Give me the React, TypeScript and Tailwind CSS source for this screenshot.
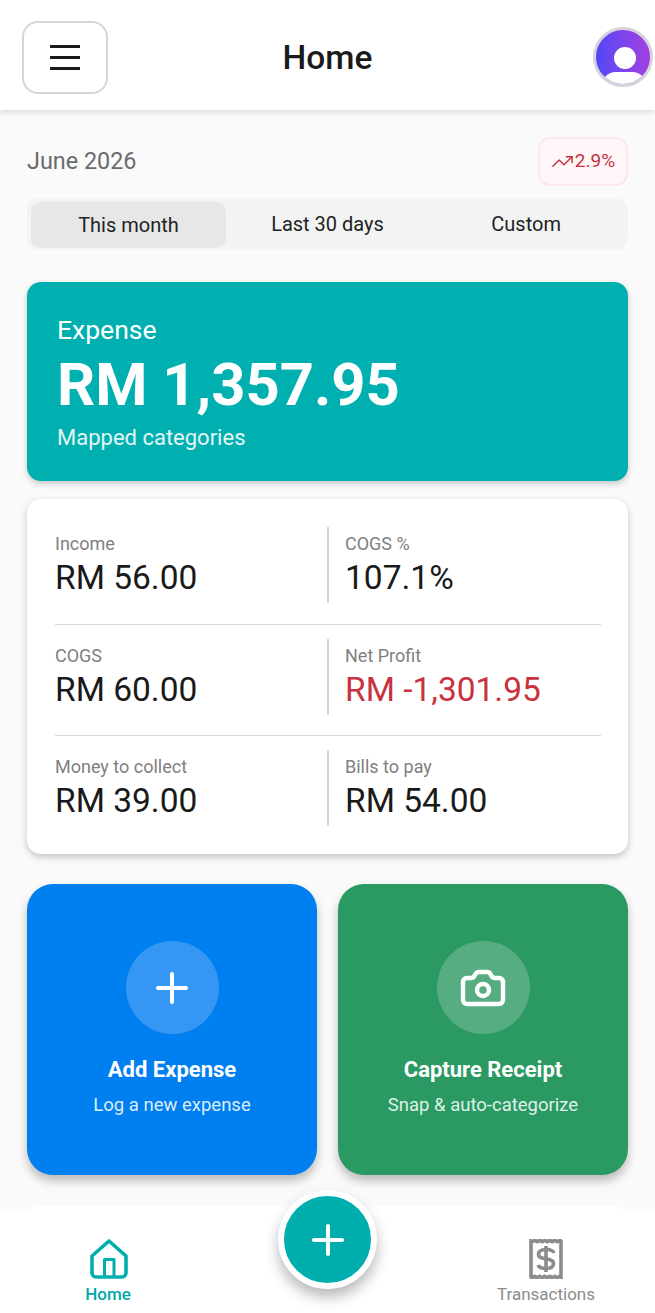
import React from "react";
import { Camera, Plus, TrendingUp } from "lucide-react";

const stats = [
  [
    { label: "Income", value: "RM 56.00" },
    { label: "COGS %", value: "107.1%" },
  ],
  [
    { label: "COGS", value: "RM 60.00" },
    { label: "Net Profit", value: "RM -1,301.95", negative: true },
  ],
  [
    { label: "Money to collect", value: "RM 39.00" },
    { label: "Bills to pay", value: "RM 54.00" },
  ],
];

const rowSpacing = ["", "mt-[21px] border-t border-[#d9d9d9] pt-[14px]", "mt-[20px] border-t border-[#d9d9d9] pt-[14px]"];

const HomeIcon = () => (
  <svg width="38" height="40" viewBox="0 0 38 40" fill="none" stroke="#00aeae" strokeWidth="3.6" strokeLinejoin="round">
    <path d="M19 2 L36 17 V34 a4 4 0 0 1 -4 4 H6 a4 4 0 0 1 -4 -4 V17 Z" />
    <path strokeWidth="3" d="M14.500 38 V20.500 H24 V38" />
  </svg>
);

const ReceiptIcon = () => (
  <svg width="34" height="40" viewBox="0 0 34 40" fill="none" stroke="#8c8c8c">
    <path
      strokeWidth="3.6"
      d="M2 2 q1.250 1.200 2.500 0 t2.500 0 t2.500 0 t2.500 0 t2.500 0 t2.500 0 t2.500 0 t2.500 0 t2.500 0 t2.500 0 t2.500 0 t2.500 0 V38 q-1.250 -1.200 -2.500 0 t-2.500 0 t-2.500 0 t-2.500 0 t-2.500 0 t-2.500 0 t-2.500 0 t-2.500 0 t-2.500 0 t-2.500 0 t-2.500 0 t-2.500 0 Z"
    />
    <path strokeWidth="3.6" d="M25 14 C24 11 21 10.500 17 10.500 C12 10.500 9.500 12 9.500 15.500 C9.500 22 24.500 17.500 24.500 24.500 C24.500 28 22 29.500 17 29.500 C13 29.500 10 28.500 9 26" />
    <path strokeWidth="3.6" d="M17 7 V33" />
  </svg>
);

export default function App() {
  return (
    <div className="relative h-[1313px] w-[655px] overflow-hidden bg-[#fafafa] font-['Roboto',sans-serif] text-[#1a1a1a]">
      {/* Header */}
      <header className="grid h-[110px] grid-cols-[1fr_auto_1fr] items-center bg-white px-[2px] shadow-[0_2px_6px_rgba(0,0,0,0.14)]">
        <button className="ml-[20px] mt-[4px] flex h-[73px] w-[86px] flex-col items-center justify-center gap-[8px] rounded-[16px] border-2 border-[#d6d6d6] bg-white">
          <span className="h-[3px] w-[30px] bg-[#1a1a1a]" />
          <span className="h-[3px] w-[30px] bg-[#1a1a1a]" />
          <span className="h-[3px] w-[30px] bg-[#1a1a1a]" />
        </button>
        <h1 className="mt-[6px] text-[33.500px] font-medium leading-none">Home</h1>
        <div className="relative mt-[4px] h-[60px] w-[60px] justify-self-end overflow-hidden rounded-full border-[3px] border-[#d4d2da] bg-gradient-to-r from-[#5146f6] to-[#a33de0]">
          <span className="absolute left-[18px] top-[17px] h-[22px] w-[22px] rounded-full bg-white" />
          <span className="absolute left-[5px] top-[42px] h-[30px] w-[46px] rounded-full bg-white" />
        </div>
      </header>

      <main className="px-[27px]">
        {/* Period row */}
        <div className="mt-[27px] flex h-[49px] items-center justify-between">
          <span className="text-[23.400px] text-[#6b6b6b]">June 2026</span>
          <div className="flex h-[49px] w-[90px] items-center justify-center gap-[1px] rounded-[12px] border-2 border-[#fbe8ea] bg-[#fef6f7] text-[19px] text-[#c8323e]">
            <TrendingUp size={23} strokeWidth={1.5} />
            <span>2.9%</span>
          </div>
        </div>

        {/* Tabs */}
        <div className="mt-[12px] grid h-[52px] grid-cols-3 items-center rounded-[12px] bg-[#f3f3f3] px-[4px] text-center text-[20px] text-[#222]">
          <div className="mt-[1px] flex h-[46px] w-[195px] items-center justify-center rounded-[10px] bg-[#e7e7e7]">This month</div>
          <div>Last 30 days</div>
          <div className="pl-[2px]">Custom</div>
        </div>

        {/* Expense card */}
        <section className="mt-[32px] h-[199px] rounded-[14px] bg-[#00b0b0] pl-[30px] pt-[33px] text-white shadow-[0_3px_6px_rgba(0,0,0,0.2)]">
          <div className="text-[26.500px] leading-[30px]">Expense</div>
          <div className="mt-[5px] text-[59.700px] font-bold leading-[70px]">RM 1,357.95</div>
          <div className="mt-[6px] text-[22px] leading-[24px] text-[#e2f6f6]">Mapped categories</div>
        </section>

        {/* Stats card */}
        <section className="mt-[18px] h-[355px] rounded-[14px] bg-white pl-[28px] pr-[27px] pt-[28px] shadow-[0_3px_7px_rgba(0,0,0,0.22)]">
          {stats.map((row, i) => (
            <div key={row[0].label} className={rowSpacing[i]}>
              <div className="grid h-[76px] grid-cols-[274px_1fr]">
                {row.map((s, j) => (
                  <div key={s.label} className={j === 0 ? "border-r-2 border-[#d4d4d4]" : "pl-[16px]"}>
                    <div className="text-[18px] leading-[34px] text-[#808080]">{s.label}</div>
                    <div className={`text-[33.500px] leading-[34px] ${s.negative ? "text-[#c8323e]" : "text-[#1a1a1a]"}`}>
                      {s.value}
                    </div>
                  </div>
                ))}
              </div>
            </div>
          ))}
        </section>

        {/* Action buttons */}
        <div className="mt-[30px] grid grid-cols-[290px_290px] gap-[21px] text-white">
          <div className="flex h-[291px] flex-col items-center rounded-[26px] bg-[#007ff0] pt-[57px] shadow-[0_6px_10px_rgba(0,0,0,0.25)]">
            <div className="flex h-[93px] w-[93px] items-center justify-center rounded-full bg-[#3597f3]">
              <Plus size={48} strokeWidth={2} />
            </div>
            <div className="mt-[21px] text-[22px] font-bold leading-[30px]">Add Expense</div>
            <div className="mt-[7px] text-[18.500px] leading-[26px] text-[#dcedfd]">Log a new expense</div>
          </div>
          <div className="flex h-[291px] flex-col items-center rounded-[26px] bg-[#2b9962] pt-[57px] shadow-[0_6px_10px_rgba(0,0,0,0.25)]">
            <div className="flex h-[93px] w-[93px] items-center justify-center rounded-full bg-[#55ad81]">
              <Camera size={48} strokeWidth={2.2} />
            </div>
            <div className="mt-[21px] text-[22px] font-bold leading-[30px]">Capture Receipt</div>
            <div className="mt-[7px] text-[18.500px] leading-[26px] text-[#dff1e8]">Snap &amp; auto-categorize</div>
          </div>
        </div>

        {/* Next card, cut off by the bottom bar */}
        <div className="mt-[31px] h-[120px] rounded-[14px] bg-white" />
      </main>

      {/* Bottom bar */}
      <nav className="absolute inset-x-0 bottom-0 flex h-[102px] items-start justify-between bg-white pl-[79px] pr-[60px] pt-[28px]">
        <div className="flex w-[60px] flex-col items-center">
          <HomeIcon />
          <span className="ml-[-2px] mt-[5px] text-[17px] font-medium leading-[20px] text-[#00a8a8]">Home</span>
        </div>
        <div className="flex flex-col items-center">
          <ReceiptIcon />
          <span className="mt-[5px] text-[17px] leading-[20px] text-[#8c8c8c]">Transactions</span>
        </div>
      </nav>

      {/* FAB */}
      <button className="absolute left-[278px] top-[1190px] flex h-[99px] w-[99px] items-center justify-center rounded-full border-[6px] border-white bg-[#00aeae] text-white shadow-[0_8px_14px_rgba(0,0,0,0.28)]">
        <Plus size={48} strokeWidth={2} />
      </button>
    </div>
  );
}
